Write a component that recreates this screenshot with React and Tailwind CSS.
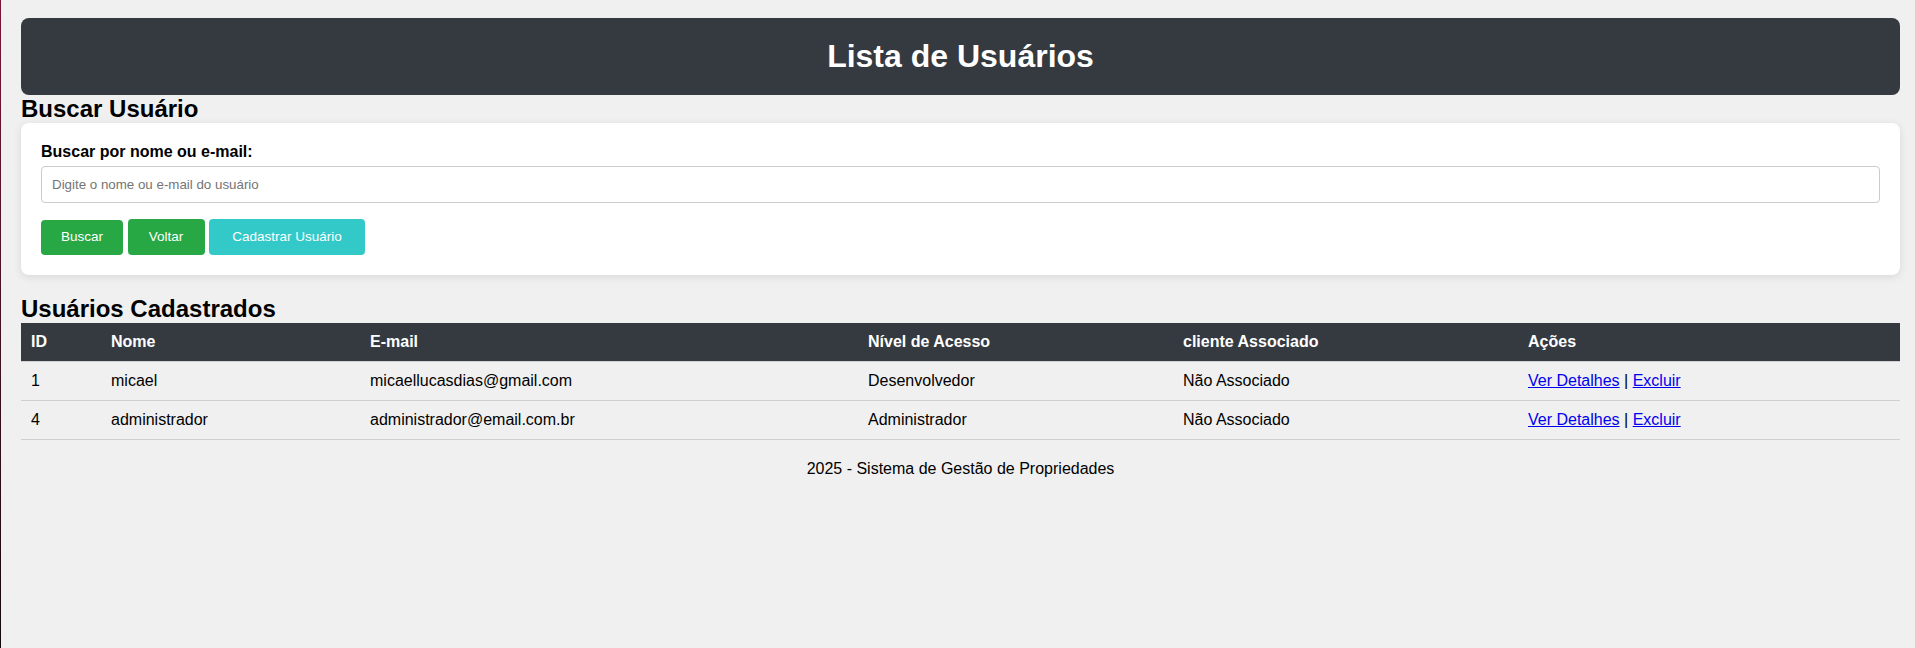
const users = [
  { id: 1, nome: "micael", email: "micaellucasdias@gmail.com", nivel: "Desenvolvedor", cliente: "Não Associado" },
  { id: 4, nome: "administrador", email: "administrador@email.com.br", nivel: "Administrador", cliente: "Não Associado" },
];

const App = () => {
  return (
    <div className="flex min-h-screen bg-[#f0f0f0] text-black font-['Liberation_Sans',Arial,sans-serif]">
      <div className="w-px shrink-0 bg-gradient-to-b from-[#7a1636] to-[#14080c]" />

      <div className="flex-1 pl-5 pr-[15px] pt-[18px]">
        <header className="bg-[#343a40] rounded-lg py-5 text-center">
          <h1 className="text-[32px] leading-[37px] font-bold text-white">
            Lista de Usuários
          </h1>
        </header>

        <h2 className="text-[24px] leading-[28px] font-bold">Buscar Usuário</h2>

        <div className="bg-white rounded-lg p-5 shadow-[0_2px_8px_rgba(0,0,0,0.1)]">
          <label htmlFor="busca" className="block text-[16px] leading-[18px] font-bold mb-[5px]">
            Buscar por nome ou e-mail:
          </label>
          <input
            id="busca"
            type="text"
            placeholder="Digite o nome ou e-mail do usuário"
            className="block w-full h-[37px] px-[10px] border border-[#ccc] rounded text-[13.333px] bg-white placeholder:text-[#757575] outline-none"
          />
          <div className="flex items-start gap-[4.5px] mt-[16px]">
            <button className="mt-px h-[35px] w-[82px] rounded bg-[#28a745] text-white text-[13.5px]">
              Buscar
            </button>
            <a className="flex items-center justify-center h-[36px] w-[77px] rounded bg-[#28a745] text-white text-[13.5px]">
              Voltar
            </a>
            <a className="flex items-center justify-center h-[36px] w-[156px] rounded bg-[#33c9c9] text-white text-[13.5px]">
              Cadastrar Usuário
            </a>
          </div>
        </div>

        <h2 className="mt-5 text-[24px] leading-[28px] font-bold">Usuários Cadastrados</h2>

        <table className="w-full table-fixed border-collapse text-[16px] leading-[18px]">
          <colgroup>
            <col className="w-[80px]" />
            <col className="w-[259px]" />
            <col className="w-[498px]" />
            <col className="w-[315px]" />
            <col className="w-[345px]" />
            <col />
          </colgroup>
          <thead>
            <tr className="bg-[#343a40] text-white">
              <th className="p-[10px] text-left font-bold border-b border-[#d0d0d0]">ID</th>
              <th className="p-[10px] text-left font-bold border-b border-[#d0d0d0]">Nome</th>
              <th className="p-[10px] text-left font-bold border-b border-[#d0d0d0]">E-mail</th>
              <th className="p-[10px] text-left font-bold border-b border-[#d0d0d0]">Nível de Acesso</th>
              <th className="p-[10px] text-left font-bold border-b border-[#d0d0d0]">cliente Associado</th>
              <th className="p-[10px] text-left font-bold border-b border-[#d0d0d0]">Ações</th>
            </tr>
          </thead>
          <tbody>
            {users.map((u) => (
              <tr key={u.id}>
                <td className="p-[10px] border-b border-[#d0d0d0]">{u.id}</td>
                <td className="p-[10px] border-b border-[#d0d0d0]">{u.nome}</td>
                <td className="p-[10px] border-b border-[#d0d0d0]">{u.email}</td>
                <td className="p-[10px] border-b border-[#d0d0d0]">{u.nivel}</td>
                <td className="p-[10px] border-b border-[#d0d0d0]">{u.cliente}</td>
                <td className="p-[10px] border-b border-[#d0d0d0]">
                  <a href="#" className="text-[#0000ee] underline">Ver Detalhes</a>
                  {" | "}
                  <a href="#" className="text-[#0000ee] underline">Excluir</a>
                </td>
              </tr>
            ))}
          </tbody>
        </table>

        <footer className="mt-5 text-center text-[16px] leading-[18px]">
          2025 - Sistema de Gestão de Propriedades
        </footer>
      </div>
    </div>
  );
};

export default App;
